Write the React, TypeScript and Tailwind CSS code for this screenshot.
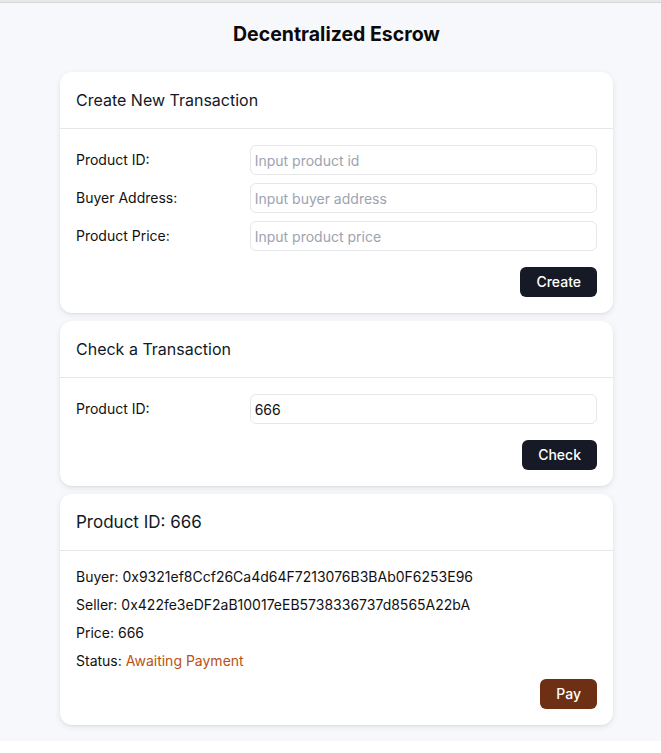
const Card = (props: { title: string; big?: boolean; children: React.ReactNode }) => {
  return (
    <div className="bg-white rounded-xl shadow-[0_2px_6px_rgba(0,0,0,0.08),0_1px_2px_rgba(0,0,0,0.05)]">
      <div className="px-4 py-4 border-b border-[#e5e7eb]">
        <h2 className={(props.big ? "text-[17px]" : "text-base") + " leading-6 text-[#111827]"}>{props.title}</h2>
      </div>
      <div className="px-4 pt-4 pb-4">{props.children}</div>
    </div>
  );
};

const Field = (props: { label: string; placeholder?: string; value?: string }) => {
  return (
    <div className="grid grid-cols-3 items-center">
      <label className="text-sm text-[#111]">{props.label}</label>
      <input
        className="col-span-2 h-[30px] rounded-md border border-[#e5e7eb] px-1 text-sm text-[#111] placeholder:text-[#9ca3af] outline-none"
        placeholder={props.placeholder}
        defaultValue={props.value}
      />
    </div>
  );
};

const Btn = (props: { label: string; color?: string }) => {
  return (
    <div className="flex justify-end">
      <button className={(props.color || "bg-[#161a26]") + " h-[30px] px-4 rounded-md text-sm font-medium text-white"}>
        {props.label}
      </button>
    </div>
  );
};

function App() {
  return (
    <div className="min-h-[740px] bg-[#f7f8fc] font-['Inter',sans-serif]">
      <div className="h-[3px] bg-[#e8e8e8] border-b border-[#d6d6d6]"></div>
      <div className="pl-[60px] pr-[48px] pt-[17px] pb-4">
        <h1 className="text-[19.5px] leading-7 font-bold text-center text-[#0a0a0a]">Decentralized Escrow</h1>
        <div className="mt-6 flex flex-col gap-2">
          <Card title="Create New Transaction">
            <div className="flex flex-col gap-2">
              <Field label="Product ID:" placeholder="Input product id" />
              <Field label="Buyer Address:" placeholder="Input buyer address" />
              <Field label="Product Price:" placeholder="Input product price" />
            </div>
            <div className="mt-4">
              <Btn label="Create" />
            </div>
          </Card>
          <Card title="Check a Transaction">
            <Field label="Product ID:" value="666" />
            <div className="mt-4">
              <Btn label="Check" />
            </div>
          </Card>
          <Card title="Product ID: 666" big>
            <div className="flex flex-col gap-2 text-sm text-[#111]">
              <p className="leading-5">Buyer: 0x9321ef8Ccf26Ca4d64F7213076B3BAb0F6253E96</p>
              <p className="leading-5">Seller: 0x422fe3eDF2aB10017eEB5738336737d8565A22bA</p>
              <p className="leading-5">Price: 666</p>
              <p className="leading-5">
                Status: <span className="text-[#b9520f]">Awaiting Payment</span>
              </p>
            </div>
            <div className="mt-2">
              <Btn label="Pay" color="bg-[#6e3014]" />
            </div>
          </Card>
        </div>
      </div>
    </div>
  );
}

export default App;
